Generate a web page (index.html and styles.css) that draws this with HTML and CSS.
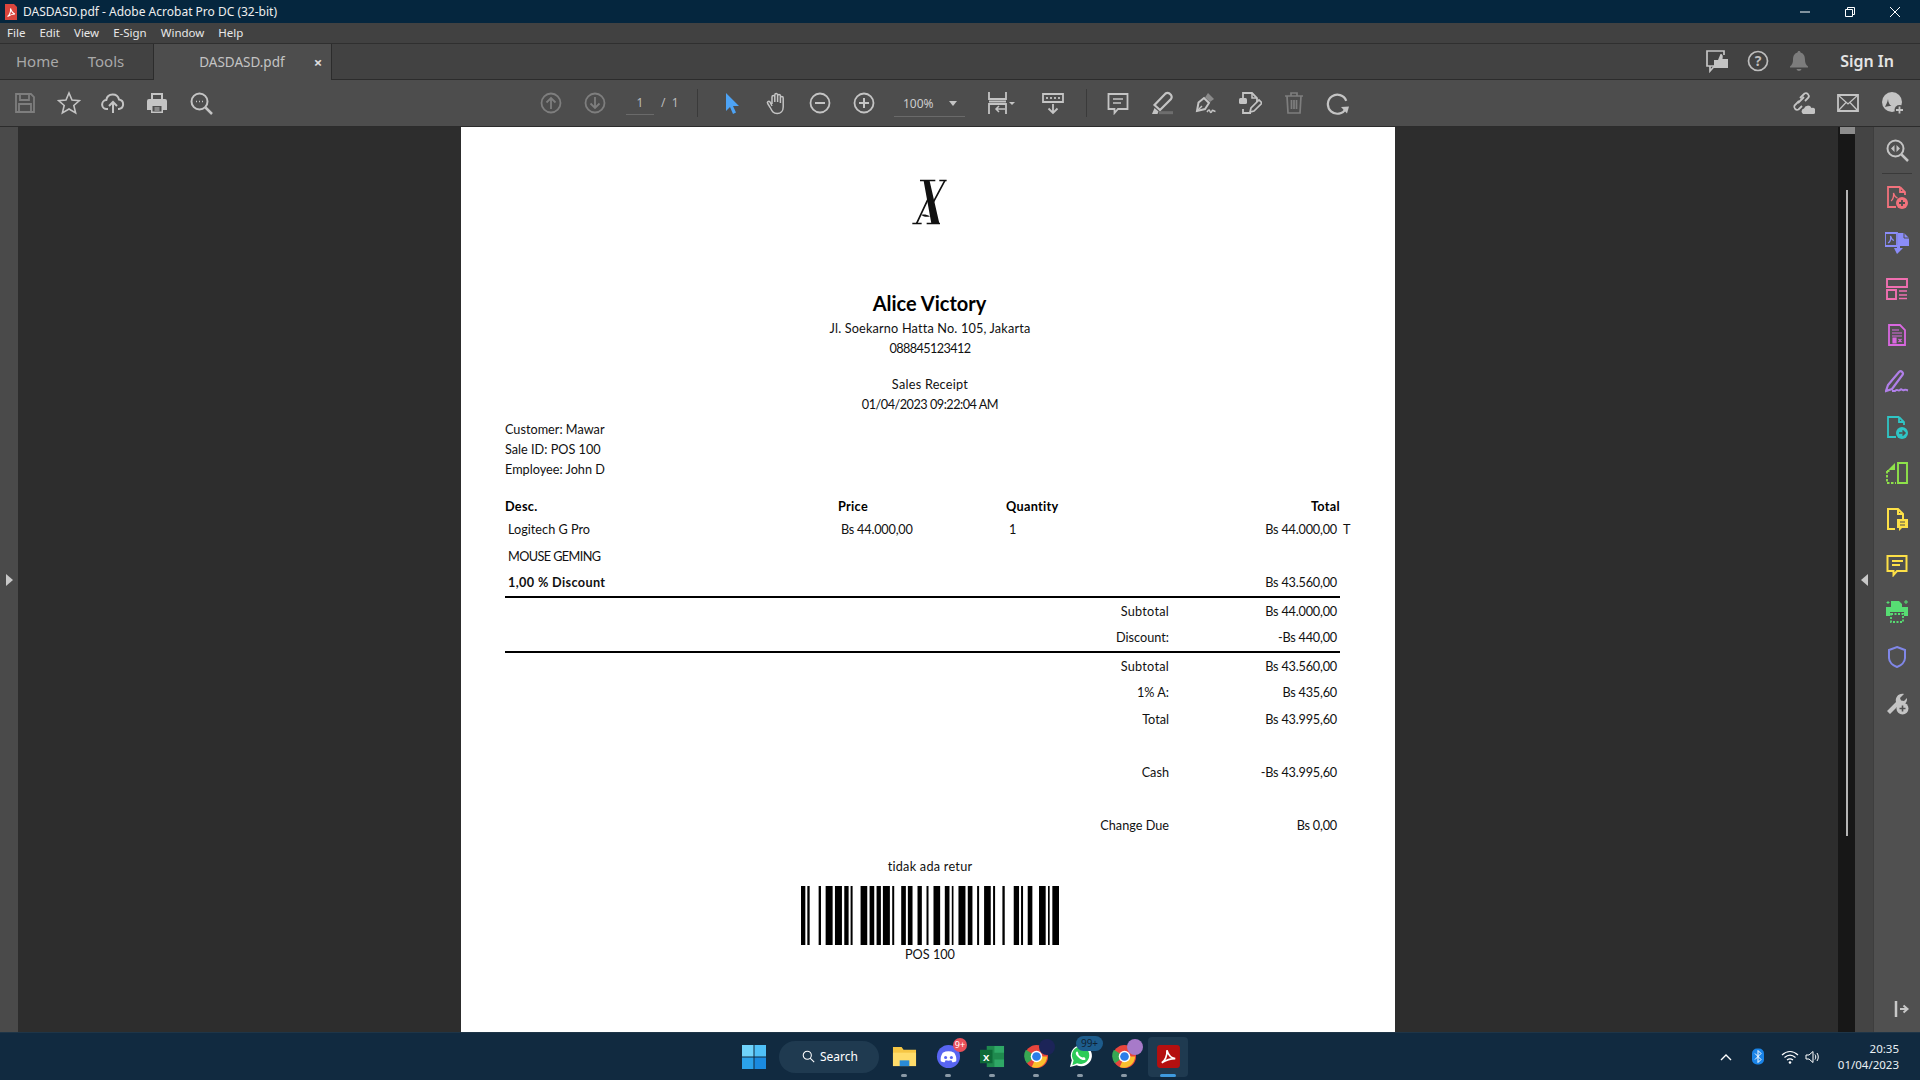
FILE: index.html
```html
<!DOCTYPE html>
<html lang="en">
<head>
<meta charset="utf-8">
<title>DASDASD.pdf - Adobe Acrobat Pro DC (32-bit)</title>
<link rel="stylesheet" href="styles.css">
</head>
<body>
<header class="titlebar">
  <svg class="app-ico" viewBox="0 0 14 16"><path d="M1 0h9l3 3v13H1z" fill="#d9453d"/><path d="M3.500 12.500c2-1 3.500-5 3-8 1 3 2 5 4.500 5.500-3 0-5 1-7.500 2.500z" fill="none" stroke="#fff" stroke-width="1.100"/></svg>
  <span class="title-text">DASDASD.pdf - Adobe Acrobat Pro DC (32-bit)</span>
  <div class="winctl">
    <svg viewBox="0 0 12 12"><path d="M1 6h10" stroke="#fff" fill="none"/></svg>
    <svg viewBox="0 0 12 12"><path d="M1.500 3.500h7v7h-7zM3.500 3.500v-2h7v7h-2" stroke="#fff" fill="none"/></svg>
    <svg viewBox="0 0 12 12"><path d="M1 1l10 10M11 1L1 11" stroke="#fff" fill="none"/></svg>
  </div>
</header>
<nav class="menubar"><span>File</span><span>Edit</span><span>View</span><span>E-Sign</span><span>Window</span><span>Help</span></nav>
<div class="tabbar">
  <span class="tab-home">Home</span>
  <span class="tab-tools">Tools</span>
  <div class="tab-doc"><span class="tab-name">DASDASD.pdf</span><span class="tab-x">×</span></div>
  <div class="tab-right">
    <svg class="ic" viewBox="0 0 24 24"><path d="M10 17H2V2h17v4" fill="none" stroke="#c4c4c4" stroke-width="1.700"/><path d="M5 17v5l4.500-5" fill="none" stroke="#c4c4c4" stroke-width="1.700"/><path d="M9 11h4l2.500-6c2.500 0 2.500 2.500 2 5H23v9H9z" fill="#c4c4c4"/></svg>
    <svg class="ic" viewBox="0 0 24 24"><circle cx="12" cy="12" r="9.500" fill="none" stroke="#bdbdbd" stroke-width="1.700"/><text x="12" y="16.500" class="qm">?</text></svg>
    <svg class="ic" viewBox="0 0 24 24"><path d="M12 2c1 0 1.500.7 1.500 1.500C17 4.500 18 7.500 18 11c0 3 1 5 3 6.500v1H3v-1c2-1.500 3-3.500 3-6.500 0-3.500 1-6.500 4.500-7.500C10.500 2.700 11 2 12 2zM9.500 20h5c-.5 2.500-4.500 2.500-5 0z" fill="#7c7c7c"/></svg>
    <span class="signin">Sign In</span>
  </div>
</div>
<div class="toolbar">
  <div class="tool-group">
    <svg class="ic" viewBox="0 0 24 24"><path d="M3 3h15l3 3v15H3z M7 3v6h9V3 M6 21v-8h12v8" fill="none" stroke="#7e7e7e" stroke-width="1.800"/></svg>
    <svg class="ic" viewBox="0 0 24 24"><path d="M12 2l3 7 7.500.6-5.700 4.900 1.800 7.400L12 18l-6.600 3.900 1.800-7.400L1.500 9.600 9 9z" fill="none" stroke="#c4c4c4" stroke-width="1.600"/></svg>
    <svg class="ic" viewBox="0 0 24 24"><path d="M7 18H6a4.500 4.500 0 0 1-.7-9A6.500 6.500 0 0 1 18 8.500 4.800 4.800 0 0 1 18 18h-1M12 22V11M8 15l4-4 4 4" fill="none" stroke="#c4c4c4" stroke-width="2"/></svg>
    <svg class="ic" viewBox="0 0 24 24"><path d="M6 8V2h12v6h2a2 2 0 0 1 2 2v9h-4v3H6v-3H2v-9a2 2 0 0 1 2-2z" fill="#c4c4c4"/><path d="M8 4h8v4H8zM7.500 15h9v5.500h-9z" fill="#4d4d4d"/><path d="M9.500 17h5M9.500 19h5" stroke="#c4c4c4"/></svg>
    <svg class="ic" viewBox="0 0 24 24"><circle cx="10.500" cy="10.500" r="8" fill="none" stroke="#c4c4c4" stroke-width="2"/><path d="M16.500 16.500L23 23" stroke="#c4c4c4" stroke-width="2.500"/><path d="M7 10.500h1M10 10.500h1M13 10.500h1" stroke="#c4c4c4" stroke-width="1.600"/></svg>
  </div>
  <div class="tool-group nav-group">
    <svg class="ic" viewBox="0 0 24 24"><circle cx="12" cy="12" r="9.500" fill="none" stroke="#7e7e7e" stroke-width="1.800"/><path d="M12 18V7M7.500 11.500L12 7l4.500 4.500" fill="none" stroke="#7e7e7e" stroke-width="1.800"/></svg>
    <svg class="ic" viewBox="0 0 24 24"><circle cx="12" cy="12" r="9.500" fill="none" stroke="#7e7e7e" stroke-width="1.800"/><path d="M12 6v11M7.500 12.500L12 17l4.500-4.500" fill="none" stroke="#7e7e7e" stroke-width="1.800"/></svg>
    <div class="page-field"><span class="page-num">1</span><span class="page-total">/ &nbsp;1</span></div>
  </div>
  <span class="sep"></span>
  <div class="tool-group">
    <svg class="ic" viewBox="0 0 24 24"><path d="M6 2l13 13h-6l3 6.500-3 1.500-3-7-4 4z" fill="#4da3f5"/></svg>
    <svg class="ic" viewBox="0 0 24 24"><path d="M8 13V6a1.400 1.400 0 0 1 2.800 0M10.800 11V4a1.400 1.400 0 0 1 2.800 0v7M13.600 11V5a1.400 1.400 0 0 1 2.800 0v6M16.400 12V7a1.400 1.400 0 0 1 2.800 0v9c0 4-2.500 6.500-6 6.500-4 0-5-2-7-6l-2.500-4c-1-1.500 1-3 2.300-1.500L8 15" fill="none" stroke="#c4c4c4" stroke-width="1.500"/></svg>
    <svg class="ic" viewBox="0 0 24 24"><circle cx="12" cy="12" r="9.500" fill="none" stroke="#c4c4c4" stroke-width="1.800"/><path d="M7 12h10" stroke="#c4c4c4" stroke-width="2"/></svg>
    <svg class="ic" viewBox="0 0 24 24"><circle cx="12" cy="12" r="9.500" fill="none" stroke="#c4c4c4" stroke-width="1.800"/><path d="M7 12h10M12 7v10" stroke="#c4c4c4" stroke-width="2"/></svg>
  </div>
  <div class="zoom-field"><span>100%</span><i class="caret"></i></div>
  <div class="tool-group fit-group">
    <svg class="ic fit" viewBox="0 0 28 24"><path d="M2 1v7h17V1M2 23v-10h17v10M2 10.500h17" fill="none" stroke="#c4c4c4" stroke-width="1.800"/><path d="M18 18h-9m3-3l-3 3 3 3" fill="none" stroke="#c4c4c4" stroke-width="1.500"/><path d="M22 11h6l-3 3z" fill="#c4c4c4"/></svg>
    <svg class="ic" viewBox="0 0 24 24"><path d="M2 3h20v8H2z" fill="none" stroke="#c4c4c4" stroke-width="1.800"/><path d="M6 6v2M10 6v2M14 6v2M18 6v2" stroke="#c4c4c4" stroke-width="1.800"/><path d="M12 13v9M7.500 17.500L12 22l4.500-4.500" fill="none" stroke="#c4c4c4" stroke-width="1.800"/></svg>
  </div>
  <span class="sep sep-b"></span>
  <div class="tool-group">
    <svg class="ic" viewBox="0 0 24 24"><path d="M2.500 3h19v15H12l-3.500 4v-4h-6z" fill="none" stroke="#c4c4c4" stroke-width="1.800"/><path d="M7 8h10M7 12h8" stroke="#c4c4c4" stroke-width="1.500"/></svg>
    <svg class="ic" viewBox="0 0 24 24"><path d="M15.500 2.500c1.500-1 2.500-1 4 0l1.500 1.500c1 1.500 1 2.500 0 4L10 19l-5.500-5z" fill="none" stroke="#c4c4c4" stroke-width="2.200"/><path d="M2 23l2.500-6 4 3.500-1 2.500z" fill="#c4c4c4"/><path d="M9 21.700h14" stroke="#6e6e6e" stroke-width="3"/></svg>
    <svg class="ic" viewBox="0 0 24 24"><path d="M3 20l1.500-8.500L10 7l5 5-4 6z" fill="none" stroke="#c4c4c4" stroke-width="2"/><path d="M3 20l5-5" stroke="#c4c4c4" stroke-width="1.500"/><path d="M11 6.500l3-4.500 6 6-4 3z" fill="#8a8a8a"/><path d="M13 21c2-3 2.500-2 3-.5s1.500 1 2-.5 1.500 0 3.500.5" fill="none" stroke="#c4c4c4" stroke-width="1.500"/></svg>
    <svg class="ic" viewBox="0 0 24 24"><path d="M5 7V2h9l5 5v4M5 18v4h8" fill="none" stroke="#c4c4c4" stroke-width="1.800"/><path d="M14 2v5h5" fill="none" stroke="#c4c4c4" stroke-width="1.500"/><rect x="1" y="7" width="8" height="6" rx="1.500" fill="#c4c4c4"/><path d="M12 21l1-4 8-8 3 3-8 8z" fill="none" stroke="#c4c4c4" stroke-width="1.700"/></svg>
    <svg class="ic" viewBox="0 0 24 24"><path d="M3 5h18M9 5V2h6v3M5 5l1 17h12l1-17M9.500 9v9M12 9v9M14.500 9v9" fill="none" stroke="#7e7e7e" stroke-width="1.700"/></svg>
    <svg class="ic" viewBox="0 0 24 24"><path d="M18 19.500A9.500 9.500 0 1 1 20.500 12" fill="none" stroke="#c4c4c4" stroke-width="2.200" transform="rotate(-15 12 12)"/><path d="M15 16l8-.5-2 7z" fill="#c4c4c4"/></svg>
  </div>
  <div class="tool-group tool-right">
    <svg class="ic" viewBox="0 0 24 24"><path d="M10 13l-4.500 4.500a3 3 0 0 0 4 4L13 18M11 10l4.500-4.500a3 3 0 0 1 4 4L16 13M9 15l6-6" fill="none" stroke="#c4c4c4" stroke-width="1.800" transform="translate(-2 -3)"/><path d="M12 23a3 3 0 0 1 1-5.500 4 4 0 0 1 7.500-.5 3 3 0 0 1 2 6z" fill="#c4c4c4"/></svg>
    <svg class="ic" viewBox="0 0 24 24"><path d="M2 4h20v16H2z" fill="none" stroke="#c4c4c4" stroke-width="1.800"/><path d="M2 4l10 9 10-9M2 20l8-8.500M22 20l-8-8.500" fill="none" stroke="#c4c4c4" stroke-width="1.300"/></svg>
    <svg class="ic" viewBox="0 0 24 24"><circle cx="11" cy="11" r="10" fill="#c4c4c4"/><path d="M4 16c1.200-2.500 2.500-5 3-8 .3 3.500 1.300 5.800 3.500 7-2.500 0-4 .2-6.500 1z" fill="#4d4d4d"/><circle cx="18.500" cy="19" r="5" fill="#4d4d4d"/><path d="M18.500 15.500v7M15 19h7" stroke="#c4c4c4" stroke-width="1.800"/></svg>
  </div>
</div>
<main class="workspace">
  <aside class="left-strip"><i class="tri tri-r"></i></aside>
  <section class="viewer">
    <article class="paper">
      <svg class="logo" viewBox="390 50 115 150"><path d="M420 58h46v5h-46zM431 62h18l29 127h-24zM478 58h22v5h-22zM397 187h28v5h-28zM440 187h40v5h-40z" fill="#111"/><path d="M495 60l-45 84M448 108l-38 81" fill="none" stroke="#111" stroke-width="5"/><path d="M424 164c8-3 16-1 26 4-8 3-18 2-26-4z" fill="#111"/></svg>
      <h1 class="store">Alice Victory</h1>
      <p class="center sp-addr">Jl. Soekarno Hatta No. 105, Jakarta</p>
      <p class="center sp-num">088845123412</p>
      <p class="center gap sp-soft">Sales Receipt</p>
      <p class="center sp-date">01/04/2023 09:22:04 AM</p>
      <div class="customer">
        <p>Customer: Mawar</p>
        <p>Sale ID: POS 100</p>
        <p>Employee: John D</p>
      </div>
      <div class="items">
        <div class="row head"><b>Desc.</b><b>Price</b><b>Quantity</b><b class="r">Total</b></div>
        <div class="row"><span class="in">Logitech G Pro</span><span class="in money">Bs 44.000,00</span><span class="in">1</span><span class="r in-r money">Bs 44.000,00<em class="tax">T</em></span></div>
        <div class="row"><span class="in sp-caps">MOUSE GEMING</span></div>
        <div class="row"><b class="in wide">1,00 % Discount</b><span class="r in-r money">Bs 43.560,00</span></div>
      </div>
      <div class="totals top-rule">
        <div class="total-row"><span class="sp-soft">Subtotal</span><span class="money">Bs 44.000,00</span></div>
        <div class="total-row"><span>Discount:</span><span class="money">-Bs 440,00</span></div>
      </div>
      <div class="totals top-rule">
        <div class="total-row"><span class="sp-soft">Subtotal</span><span class="money">Bs 43.560,00</span></div>
        <div class="total-row"><span>1% A:</span><span class="money">Bs 435,60</span></div>
        <div class="total-row"><span>Total</span><span class="money">Bs 43.995,60</span></div>
        <div class="total-row"></div>
        <div class="total-row"><span>Cash</span><span class="money">-Bs 43.995,60</span></div>
        <div class="total-row"></div>
        <div class="total-row"><span>Change Due</span><span class="money">Bs 0,00</span></div>
      </div>
      <p class="center policy sp-soft">tidak ada retur</p>
      <svg class="barcode" viewBox="65 0 775 100" preserveAspectRatio="none"><path d="M65 0h13v100h-13zM84 0h7v100h-7zM118 0h7v100h-7zM139 0h21v100h-21zM167 0h21v100h-21zM195 0h13v100h-13zM214 0h6v100h-6zM244 0h20v100h-20zM271 0h14v100h-14zM292 0h13v100h-13zM311 0h21v100h-21zM339 0h6v100h-6zM366 0h14v100h-14zM386 0h14v100h-14zM415 0h13v100h-13zM442 0h6v100h-6zM463 0h20v100h-20zM497 0h14v100h-14zM518 0h5v100h-5zM538 0h21v100h-21zM566 0h14v100h-14zM594 0h6v100h-6zM615 0h20v100h-20zM642 0h6v100h-6zM670 0h7v100h-7zM704 0h16v100h-16zM726 0h6v100h-6zM746 0h14v100h-14zM780 0h20v100h-20zM807 0h5v100h-5zM820 0h20v100h-20z" fill="#000"/></svg>
      <p class="center code">POS 100</p>
    </article>
  </section>
  <div class="scrolltrack"><i class="scroll-top"></i><i class="scroll-thumb"></i></div>
  <aside class="collapse"><i class="tri tri-l"></i></aside>
  <aside class="rail">
    <svg class="ic" viewBox="0 0 24 24"><circle cx="10.500" cy="10.500" r="8" fill="none" stroke="#c4c4c4" stroke-width="2"/><path d="M16.500 16.500L23 23" stroke="#c4c4c4" stroke-width="2.500"/><path d="M9.500 7v7l-3.500-3.500zM11.500 7v7l3.500-3.500z" fill="#c4c4c4"/></svg>
    <hr class="rail-sep">
    <svg class="ic" viewBox="0 0 24 24"><path d="M15 2H3v20h8M15 2l5 5v3M15 2v5h5" fill="none" stroke="#f2727c" stroke-width="1.800"/><path d="M6 16c2-1 3-5 2.500-8 1 3 2 4.500 4 5" fill="none" stroke="#f2727c" stroke-width="1.300"/><circle cx="17" cy="18" r="6" fill="#f2727c"/><path d="M14 18h6M17 15v6" stroke="#4f4f4f" stroke-width="1.800"/></svg>
    <svg class="ic" viewBox="0 0 24 24"><path d="M0 2h12v13H0z" fill="none" stroke="#8a8cf8" stroke-width="1.800"/><path d="M3 12c2-1 3-4 2.500-7 1 3 2 4 3.500 4.500" fill="none" stroke="#8a8cf8" stroke-width="1.200"/><path d="M13 2h6l5 5v8H13z" fill="#8a8cf8"/><path d="M19 2v5h5" fill="none" stroke="#4f4f4f"/><path d="M9 17h3v-3h3v3h3l-6 6z" fill="#8a8cf8"/></svg>
    <svg class="ic" viewBox="0 0 24 24"><path d="M2 2h20v8H2zM2 13h9v9H2z" fill="none" stroke="#f06fb0" stroke-width="1.900"/><path d="M14 14h8M14 18h8M14 21.500h8" stroke="#f06fb0" stroke-width="1.300"/></svg>
    <svg class="ic" viewBox="0 0 24 24"><path d="M4 2h11l5 5v15H4z" fill="none" stroke="#d968e0" stroke-width="1.800"/><path d="M7 7h7M7 10h10M7 13h10" stroke="#d968e0" stroke-width="1.200"/><path d="M8 15h3v5H8zM13.500 16l3 3M16.500 16l-3 3" fill="#d968e0" stroke="#d968e0" stroke-width="1.200"/></svg>
    <svg class="ic" viewBox="0 0 24 24"><path d="M1 22l2-6L14 3c2-2 5 .5 3.500 3L7 20z" fill="none" stroke="#b07fe8" stroke-width="2.200"/><path d="M7 22h3c2-3 3 1 5-1s2 1 4 0 2 0 4 .5" fill="none" stroke="#b07fe8" stroke-width="2"/></svg>
    <svg class="ic" viewBox="0 0 24 24"><path d="M14 2H3v20h8M14 2l5 5v3M14 2v5h5" fill="none" stroke="#2fc5c5" stroke-width="1.800"/><circle cx="17" cy="18" r="6" fill="#2fc5c5"/><path d="M14 18h6M17.500 15.500L20 18l-2.500 2.500" fill="none" stroke="#4f4f4f" stroke-width="1.500"/></svg>
    <svg class="ic" viewBox="0 0 24 24"><path d="M13 2h9v20h-9z" fill="none" stroke="#8ee24a" stroke-width="1.900"/><path d="M2 10v12h9M2 10h3" fill="none" stroke="#8ee24a" stroke-width="1.900" stroke-dasharray="2.500 1.500"/><path d="M10 2L3 9h7z" fill="#8ee24a"/></svg>
    <svg class="ic" viewBox="0 0 24 24"><path d="M10 22H3V2h10l5 5v5M13 2v5h5" fill="none" stroke="#fde047" stroke-width="2"/><path d="M12 12h11v9h-6l-3 3v-3h-2z" fill="#fde047"/><path d="M15 15h5M15 18h5" stroke="#4f4f4f"/></svg>
    <svg class="ic" viewBox="0 0 24 24"><path d="M2.500 3h19v15H12l-3.500 4v-4h-6z" fill="none" stroke="#fde047" stroke-width="2"/><path d="M7 8h11M7 12h8" stroke="#fde047" stroke-width="1.800"/></svg>
    <svg class="ic" viewBox="0 0 24 24"><path d="M6 8V2h8l3 3v3zM1 8h22v9h-4v-4H5v4H1z" fill="#57dd73"/><path d="M6 15h12v8H6z" fill="none" stroke="#57dd73" stroke-width="1.800" stroke-dasharray="2 1.500"/><path d="M21 1v4M19 3h4M3 2v3M1.500 3.500h3" stroke="#57dd73"/></svg>
    <svg class="ic" viewBox="0 0 24 24"><path d="M12 2l8 3v8c0 4-4 7.500-8 9-4-1.500-8-5-8-9V5z" fill="none" stroke="#8087e8" stroke-width="2"/></svg>
    <svg class="ic" viewBox="0 0 24 24"><path d="M2 20l9-9c-1-4 2-9 8-8l-4 4 1 2.500 3 .5 3-3c.5 5-3.500 8-8 7l-9 9z" fill="#c4c4c4"/><circle cx="17.500" cy="17.500" r="6" fill="#c4c4c4"/><path d="M14.500 17.500h6M17.500 14.500v6" stroke="#4f4f4f" stroke-width="1.600"/></svg>
    <svg class="ic ic-exit" viewBox="0 0 24 24"><path d="M9 4v16" stroke="#c8c8c8" stroke-width="2.500"/><path d="M13 12h7M16.500 8.500L20.500 12l-4 3.500" fill="none" stroke="#c8c8c8" stroke-width="2"/></svg>
  </aside>
</main>
<footer class="taskbar">
  <div class="task-center">
    <svg class="win" viewBox="0 0 24 24"><path d="M0 0h11.500v11.500H0z" fill="#6fd3fb"/><path d="M12.500 0H24v11.500H12.500z" fill="#4fc0f7"/><path d="M0 12.500h11.500V24H0z" fill="#2ba2ea"/><path d="M12.500 12.500H24V24H12.500z" fill="#1a8ae0"/></svg>
    <div class="search"><svg viewBox="0 0 16 16"><circle cx="6.500" cy="6.500" r="5" fill="none" stroke="#fff" stroke-width="1.300"/><path d="M10 10l5 5" stroke="#fff" stroke-width="1.300"/></svg><span>Search</span></div>
    <div class="app"><svg viewBox="0 0 26 24"><path d="M1 2h9l2 3h13v17H1z" fill="#f6c644"/><path d="M1 8h24v14H1z" fill="#ffdc6a"/><rect x="8" y="16" width="10" height="6" fill="#2a8bd6"/></svg><i class="dot"></i></div>
    <div class="app"><svg viewBox="0 0 26 26"><circle cx="13" cy="13" r="12" fill="#5865f2"/><path d="M7 9c4-2 8-2 12 0 2 3 2.500 6 2 9-1.500 1-3 1-4 1l-1-2c-2 .6-4 .6-6 0l-1 2c-1 0-2.500 0-4-1-.5-3 0-6 2-9z" fill="#fff"/><circle cx="10" cy="14" r="1.600" fill="#5865f2"/><circle cx="16" cy="14" r="1.600" fill="#5865f2"/></svg><b class="badge red">9+</b><i class="dot"></i></div>
    <div class="app"><svg viewBox="0 0 26 24"><path d="M7 1h18v22H7z" fill="#1f8a4e"/><path d="M15 1h10v7H15zM15 15h10v8H15z" fill="#2fa866"/><rect x="0" y="5" width="13" height="14" fill="#0e6b38"/><text x="6.500" y="16.500" class="xl">X</text></svg><i class="dot"></i></div>
    <div class="app"><svg viewBox="0 0 26 26"><circle cx="13" cy="13" r="12" fill="#e8453c"/><path d="M13 13L3 20a12 12 0 0 1-1-14z" fill="#38a853"/><path d="M13 13h11a12 12 0 0 1-16 11z" fill="#fbc02d"/><circle cx="13" cy="13" r="6" fill="#fff"/><circle cx="13" cy="13" r="4.500" fill="#2b7de9"/></svg><b class="avatar av1"></b><i class="dot"></i></div>
    <div class="app"><svg viewBox="0 0 26 26"><path d="M2 24l2-7A11 11 0 1 1 9 22z" fill="#fff"/><path d="M4.500 22l1.300-5A9 9 0 1 1 9.500 20z" fill="#2ccb58"/><path d="M9 8c1-1 2 2 2 3s3 3 4 3 2-1 3 1-3 3-7-1-3-5-2-6z" fill="#fff"/></svg><b class="badge blue">99+</b><i class="dot"></i></div>
    <div class="app"><svg viewBox="0 0 26 26"><circle cx="13" cy="13" r="12" fill="#e8453c"/><path d="M13 13L3 20a12 12 0 0 1-1-14z" fill="#38a853"/><path d="M13 13h11a12 12 0 0 1-16 11z" fill="#fbc02d"/><circle cx="13" cy="13" r="6" fill="#fff"/><circle cx="13" cy="13" r="4.500" fill="#2b7de9"/></svg><b class="avatar av2"></b><i class="dot"></i></div>
    <div class="app active"><svg viewBox="0 0 24 24"><rect x="1" y="1" width="22" height="22" rx="3" fill="#b50f0f"/><path d="M5.500 18c3-1.500 5.500-7 5-12 1.500 5 3.500 7.500 8 8-5 0-9 1.500-13 4z" fill="none" stroke="#fff" stroke-width="1.600"/></svg><i class="bar"></i></div>
  </div>
  <div class="tray">
    <svg class="chev" viewBox="0 0 12 8"><path d="M1 7l5-5 5 5" fill="none" stroke="#fff" stroke-width="1.400"/></svg>
    <svg class="bt" viewBox="0 0 12 16"><rect width="12" height="16" rx="5" fill="#1a84e8"/><path d="M3 5l6 6-3 3V2l3 3-6 6" fill="none" stroke="#fff"/></svg>
    <svg class="wifi" viewBox="0 0 18 14"><path d="M1 5c5-4.500 11-4.500 16 0M3.500 7.500c3.500-3 7.500-3 11 0M6 10c2-1.500 4-1.500 6 0" fill="none" stroke="#fff" stroke-width="1.200"/><circle cx="9" cy="12.500" r="1.300" fill="#fff"/></svg>
    <svg class="vol" viewBox="0 0 16 14"><path d="M1 5h3l4-3.500v11L4 9H1z" fill="none" stroke="#fff"/><path d="M10 4.500c1 1.500 1 3.500 0 5M12 3c1.700 2.500 1.700 5.500 0 8" fill="none" stroke="#fff"/></svg>
    <div class="clock"><span>20:35</span><span>01/04/2023</span></div>
  </div>
</footer>
</body>
</html>
```
FILE: styles.css
```css
* { box-sizing: border-box; margin: 0; padding: 0; }
html, body { width: 1920px; height: 1080px; overflow: hidden; }
body { display: flex; flex-direction: column; font-family: "Noto Sans", sans-serif; background: #2d2d2d; color: #ddd; }
.ic { width: 24px; height: 24px; flex: none; display: block; }

.titlebar { height: 23px; flex: none; background: #05263e; display: flex; align-items: center; padding-left: 4px; color: #eee; font-size: 12px; }
.app-ico { width: 14px; height: 16px; }
.title-text { margin-left: 5px; }
.winctl { margin-left: auto; display: flex; }
.winctl svg { width: 12px; height: 12px; margin-right: 33px; }
.winctl svg:last-child { margin-right: 19px; }

.menubar { height: 21px; flex: none; background: #414141; border-bottom: 1px solid #2f2f2f; display: flex; align-items: center; gap: 14px; padding: 0 0 2px 7px; font-size: 11.500px; color: #e8e8e8; }
.tabbar { height: 36px; flex: none; background: #424242; border-bottom: 1px solid #2c2c2c; display: flex; align-items: center; padding-bottom: 2px; font-size: 15px; color: #a9a9a9; }
.tab-home { margin-left: 16px; }
.tab-tools { margin-left: 29px; }
.tab-doc { margin-left: 29px; width: 179px; height: 36px; margin-bottom: -3px; padding-bottom: 1px; background: #4d4d4d; border-left: 1px solid #2c2c2c; border-right: 1px solid #2c2c2c; display: flex; align-items: center; font-size: 13.500px; color: #c4c4c4; }
.tab-name { margin-left: 45px; }
.tab-x { margin-left: 29px; font-weight: 700; font-size: 15px; color: #ddd; }
.tab-right { margin-left: auto; display: flex; align-items: center; gap: 17px; padding-right: 26px; }
.signin { margin-left: 12px; font-size: 16px; font-weight: 600; color: #e4e4e4; }
.qm { font: 700 14px "Noto Sans", sans-serif; fill: #bdbdbd; text-anchor: middle; }

.toolbar { height: 47px; flex: none; background: #4d4d4d; border-bottom: 1px solid #2c2c2c; display: flex; align-items: center; padding-left: 13px; color: #c8c8c8; font-size: 12px; }
.tool-group { display: flex; align-items: center; gap: 20px; }
.nav-group { margin-left: 326px; }
.page-field { display: flex; width: 62px; margin-left: -1px; }
.page-num { width: 28px; height: 24px; line-height: 24px; text-align: center; border-bottom: 1px solid #6a6a6a; color: #bbb; }
.page-total { margin-left: 7px; line-height: 24px; color: #bbb; white-space: nowrap; }
.sep { width: 1px; height: 28px; background: #3a3a3a; margin-left: 9px; margin-right: 22px; }
.sep-b { margin-left: 21px; margin-right: 19px; }
.zoom-field { margin-left: 18px; width: 62px; height: 24px; border-bottom: 1px solid #6a6a6a; display: flex; align-items: center; padding-left: 9px; color: #ccc; box-sizing: content-box; padding-top: 2px; }
.caret { margin-left: 15px; width: 0; height: 0; border: 4px solid transparent; border-top: 5px solid #c4c4c4; border-bottom: 0; }
.fit-group { margin-left: 22px; gap: 26px; }
.fit { width: 28px; }
.tool-right { margin-left: auto; padding-right: 15px; gap: 21px; }

.workspace { flex: 1; min-height: 0; display: flex; }
.left-strip { width: 18px; flex: none; background: #4a4a4a; display: flex; align-items: center; justify-content: center; }
.tri { display: block; width: 0; height: 0; border: 6px solid transparent; }
.tri-r { border-left: 7px solid #c8c8c8; border-right: 0; }
.tri-l { border-right: 7px solid #c8c8c8; border-left: 0; }
.viewer { flex: 1; min-width: 0; background: #2d2d2d; display: flex; justify-content: center; overflow: hidden; }
.scrolltrack { width: 17px; flex: none; background: #171717; display: flex; flex-direction: column; }
.scroll-top { height: 7px; margin-left: 2px; background: #8c8c8c; }
.scroll-thumb { width: 2px; height: 646px; margin: 56px 0 0 8px; background: #b5b5b5; }
.collapse { width: 18px; flex: none; background: #444; display: flex; align-items: center; justify-content: center; }
.rail { width: 47px; flex: none; background: #505050; border-left: 1px solid #3e3e3e; display: flex; flex-direction: column; align-items: center; padding: 11px 0 11px; gap: 22px; }
.rail-sep { width: 30px; border: 0; border-top: 1px solid #3a3a3a; margin: -11px 0 -11.500px; }
.ic-exit { margin-top: auto; margin-left: 3px; }

.paper { width: 934px; flex: none; height: 905px; background: #fff; color: #111; font-family: Lato, "Noto Sans", sans-serif; font-size: 12.700px; padding-top: 50px; }
.logo { display: block; width: 38.300px; height: 50px; margin: 0 auto; transform: translateX(1px); }
.store { margin: 64px 0 3px; padding-left: 3px; font-size: 20px; line-height: 24px; font-weight: 700; text-align: center; color: #000; }
.center { text-align: center; line-height: 20px; padding-left: 4px; }
.gap { margin-top: 16px; }
.sp-addr { letter-spacing: .17px; }
.sp-num { letter-spacing: -.6px; }
.sp-date { letter-spacing: -.5px; }
.sp-soft { letter-spacing: .25px; }
.sp-caps { letter-spacing: -.6px; }
.money { letter-spacing: -.2px; }
.customer { margin: 5px 0 0 44px; line-height: 20px; }
.items { margin: 13px 0 0 44px; width: 835px; }
.row { display: grid; grid-template-columns: 333px 168px 1fr 200px; height: 26.500px; line-height: 26px; white-space: nowrap; }
.head { height: 24px; line-height: 28px; color: #000; letter-spacing: .3px; }
.in { padding-left: 3px; }
.wide { font-weight: 700; grid-column: 1 / 4; letter-spacing: .35px; }
.r { text-align: right; }
.row > .r:last-child { grid-column: 4; }
.in-r { padding-right: 3px; position: relative; }
.tax { position: absolute; left: 100%; margin-left: 3px; font-style: normal; }
.top-rule { margin: 0 0 0 44px; width: 835px; border-top: 2px solid #000; }
.total-row { display: grid; grid-template-columns: 1fr 168px; padding-right: 3px; width: 100%; height: 26.500px; line-height: 26px; grid-template-rows: 26px; }
.total-row span { text-align: right; }
.total-row span:first-child { width: 664px; }
.policy { margin-top: 18px; }
.barcode { display: block; width: 258px; height: 59px; margin: 10px 0 0 340px; }
.code { line-height: 18px; }

.taskbar { height: 48px; flex: none; background: #112a40; border-top: 1px solid #1e3548; display: flex; align-items: center; position: relative; color: #fff; font-size: 12px; }
.task-center { display: flex; align-items: center; margin-left: 742px; }
.win { width: 24px; height: 24px; }
.search { margin-left: 13px; width: 100px; height: 32px; border-radius: 16px; background: #1f3a50; display: flex; align-items: center; padding-left: 23px; gap: 5px; }
.search svg { width: 13px; height: 13px; }
.app { position: relative; width: 40px; height: 40px; margin-left: 4px; display: flex; align-items: center; justify-content: center; border-radius: 4px; }
.search + .app { margin-left: 5px; }
.app svg { width: 25px; height: 25px; }
.xl { font: 700 10px "Noto Sans", sans-serif; fill: #fff; text-anchor: middle; }
.active { background: #1f3a50; }
.dot { position: absolute; bottom: 0; left: 17px; width: 6px; height: 3px; border-radius: 2px; background: #8a99a6; }
.bar { position: absolute; bottom: 0; left: 12px; width: 16px; height: 3px; border-radius: 2px; background: #3f9ade; }
.badge { position: absolute; font-weight: 400; border-radius: 8px; text-align: center; }
.red { top: 1px; right: 1px; width: 14px; height: 14px; font-size: 9px; line-height: 14px; background: #e9505a; border-radius: 50%; }
.blue { top: -1px; right: -3px; width: 27px; height: 15px; font-size: 10px; line-height: 15px; background: #1d5c8c; color: #0f2233; }
.avatar { position: absolute; top: 2px; right: 1px; width: 16px; height: 16px; border-radius: 50%; }
.av1 { background: #1c2458; }
.av2 { background: #a77ac9; }
.tray { position: absolute; right: 21px; top: 0; height: 100%; display: flex; align-items: center; }
.chev { width: 12px; height: 8px; margin-right: 20px; }
.bt { width: 12px; height: 17px; margin-right: 17px; }
.wifi { width: 18px; height: 14px; margin-right: 6px; }
.vol { width: 16px; height: 14px; margin-right: 17px; }
.clock { display: flex; flex-direction: column; align-items: flex-end; font-size: 11.500px; line-height: 16px; color: #eaf0f4; }
```
